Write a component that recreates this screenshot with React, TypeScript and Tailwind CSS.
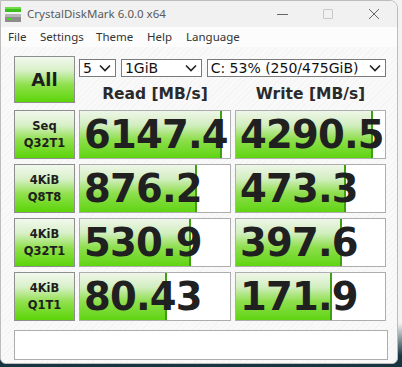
import React from "react";

const rows = [
  { l1: "Seq", l2: "Q32T1", r: "6147.4", rw: 142, w: "4290.5", ww: 137 },
  { l1: "4KiB", l2: "Q8T8", r: "876.2", rw: 117, w: "473.3", ww: 110 },
  { l1: "4KiB", l2: "Q32T1", r: "530.9", rw: 111, w: "397.6", ww: 106 },
  { l1: "4KiB", l2: "Q1T1", r: "80.43", rw: 87, w: "171.9", ww: 96 },
];

const btnGrad =
  "bg-[linear-gradient(to_bottom,#f2f8ee_0%,#d8f0c8_30%,#8fe04c_62%,#5cd408_100%)]";
const fillGrad =
  "bg-[linear-gradient(to_bottom,#eef6e8_0%,#d2eec0_30%,#8fdf4e_60%,#60d412_100%)]";

function Chevron() {
  return (
    <svg width="12" height="8" viewBox="0 0 12 8" className="shrink-0">
      <path d="M1 1.5 L6 6.5 L11 1.5" fill="none" stroke="#222" strokeWidth="1.6" />
    </svg>
  );
}

function Select({ w, text }: { w: string; text: string }) {
  return (
    <div
      className={`${w} h-[18px] bg-white border border-[#7a7a7a] flex items-center justify-between pl-[3px] pr-[4px] leading-none text-[#111]`}
    >
      <span className="font-['DejaVu_Sans'] text-[14px]">{text}</span>
      <Chevron />
    </div>
  );
}

function ResultBox({ value, fill }: { value: string; fill: number }) {
  return (
    <div className="relative h-[49px] bg-white border border-[#adadad] overflow-hidden">
      <div
        className={`absolute left-0 top-0 bottom-0 ${fillGrad} border-r-2 border-[#3f9e12]`}
        style={{ width: fill }}
      />
      <div className="relative h-full flex items-center pl-[4px] pt-[2px] font-['DejaVu_Sans'] font-bold text-[38.5px] leading-none text-[#202020] tracking-[-0.8px] whitespace-nowrap">
        {value}
      </div>
    </div>
  );
}

export default function App() {
  return (
    <div className="w-[402px] h-[367px] bg-[linear-gradient(to_bottom,#f2f2f2_0%,#f2f2f2_88%,#163540_97%)] overflow-hidden">
      <div className="w-[398px] h-[364px] flex flex-col rounded-tr-[8px] rounded-b-[6px] border border-[#bdbdbd] overflow-hidden bg-[#f8f8f8] font-['Noto_Sans']">
        {/* Title bar */}
        <div className="h-[26px] bg-[#f1f1f1] flex items-center shrink-0">
          <svg width="18" height="17" viewBox="0 0 18 17" className="ml-[3px]">
            <rect x="1" y="1" width="16" height="5" fill="#3cbf1c" />
            <rect x="1" y="1" width="16" height="2" fill="#6fdc4a" />
            <rect x="1" y="8" width="16" height="8" fill="#8c8c8c" />
            <rect x="1" y="8" width="16" height="3" fill="#b5b5b5" />
            <rect x="3" y="12" width="5" height="2" fill="#3cdc1c" />
          </svg>
          <span className="ml-[5px] text-[11.5px] text-[#5a5a5a]">CrystalDiskMark 6.0.0 x64</span>
          <div className="flex-1" />
          <div className="w-[46px] flex justify-center items-center">
            <div className="w-[11px] h-[1px] bg-[#666]" />
          </div>
          <div className="w-[46px] flex justify-center items-center">
            <div className="w-[10px] h-[10px] border border-[#c8c8c8] rounded-[1px]" />
          </div>
          <div className="w-[46px] flex justify-center items-center">
            <svg width="12" height="12" viewBox="0 0 12 12">
              <path d="M1 1 L11 11 M11 1 L1 11" stroke="#666" strokeWidth="1" />
            </svg>
          </div>
        </div>
        {/* Menu bar */}
        <div className="h-[20px] bg-[#fcfcfc] flex items-center pl-[7px] text-[11.5px] text-[#333] shrink-0">
          <span className="w-[32px]">File</span>
          <span className="w-[56px]">Settings</span>
          <span className="w-[51px]">Theme</span>
          <span className="w-[39px]">Help</span>
          <span>Language</span>
        </div>
        {/* Content */}
        <div className="flex-1 pl-[13px] pt-[9px] bg-[repeating-linear-gradient(135deg,#f9f9f9_0px,#f9f9f9_3px,#f4f4f4_3px,#f4f4f4_4px)]">
          <div className="grid grid-cols-[61px_152px_151px] gap-x-[4px] gap-y-[5px]">
            <div
              className={`h-[47px] mb-[1px] ${btnGrad} border border-[#8e8e8e] flex items-center justify-center font-['DejaVu_Sans'] font-bold text-[18px] text-[#1e1e1e]`}
            >
              All
            </div>
            <div className="col-span-2 flex flex-col">
              <div className="flex gap-[5px] mt-[3px]">
                <Select w="w-[37px]" text="5" />
                <Select w="w-[81px]" text="1GiB" />
                <Select w="w-[180px]" text="C: 53% (250/475GiB)" />
              </div>
              <div className="flex mt-[6px] font-['DejaVu_Sans'] font-bold text-[15.5px] text-[#2a2a2a] leading-[22px]">
                <div className="w-[152px] text-center">Read [MB/s]</div>
                <div className="w-[4px]" />
                <div className="w-[151px] text-center">Write [MB/s]</div>
              </div>
            </div>
            {rows.map((r, i) => (
              <React.Fragment key={i}>
                <div
                  className={`h-[49px] ${btnGrad} border border-[#8e8e8e] flex flex-col items-center justify-center font-['DejaVu_Sans'] font-bold text-[11.5px] leading-[17px] text-[#1e1e1e]`}
                >
                  <span>{r.l1}</span>
                  <span>{r.l2}</span>
                </div>
                <ResultBox value={r.r} fill={r.rw} />
                <ResultBox value={r.w} fill={r.ww} />
              </React.Fragment>
            ))}
          </div>
          <div className="mt-[9px] w-[374px] h-[30px] bg-white border border-[#adadad]" />
        </div>
      </div>
    </div>
  );
}
